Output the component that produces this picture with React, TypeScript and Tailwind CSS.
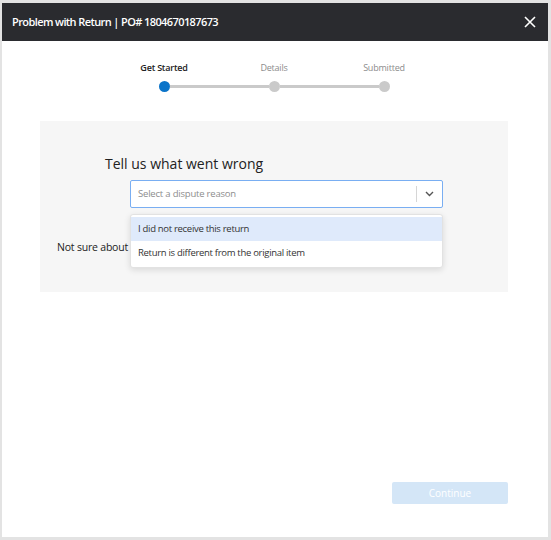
import React from 'react';

const steps = [
  { label: 'Get Started', active: true },
  { label: 'Details', active: false },
  { label: 'Submitted', active: false },
];

const reasons = ['I did not receive this return', 'Return is different from the original item'];

const App: React.FC = () => {
  return (
    <div
      className="h-[540px] w-[551px] bg-[#e3e3e3] pt-[3px] pl-[2px]"
      style={{ fontFamily: '"Open Sans", "Noto Sans", sans-serif' }}
    >
      <div className="flex h-[534px] w-[546px] flex-col bg-white">
        {/* header */}
        <div className="flex h-[38px] items-center justify-between bg-[#2a2b2f] pl-[10px] pr-[12px]">
          <span className="text-[11px] font-semibold tracking-[-0.6px] text-white">
            Problem with Return | PO# 1804670187673
          </span>
          <svg width="12" height="12" viewBox="0 0 12 12" className="text-white">
            <path d="M1 1 L11 11 M11 1 L1 11" stroke="currentColor" strokeWidth="1.6" />
          </svg>
        </div>

        {/* stepper */}
        <div className="ml-[107px] mt-[21px] w-[330px]">
          <div className="grid grid-cols-3">
            {steps.map((s) => (
              <div
                key={s.label}
                className={`text-center text-[9px] leading-[12px] tracking-[-0.2px] ${
                  s.active ? 'font-semibold text-[#222]' : 'text-[#8c8c8c]'
                }`}
              >
                {s.label}
              </div>
            ))}
          </div>
          <div className="mt-[7px] flex items-center px-[49.5px]">
            <div className="h-[11px] w-[11px] rounded-full bg-[#0b74c9]" />
            <div className="h-[3px] flex-1 bg-[#cacaca]" />
            <div className="h-[11px] w-[11px] rounded-full bg-[#cacaca]" />
            <div className="h-[3px] flex-1 bg-[#cacaca]" />
            <div className="h-[11px] w-[11px] rounded-full bg-[#cacaca]" />
          </div>
        </div>

        {/* gray panel */}
        <div className="ml-[38px] mr-[40px] mt-[29px] h-[171px] bg-[#f6f6f6] pt-[33px]">
          <div className="pl-[65px] text-[14px] leading-[20px] text-[#222]">Tell us what went wrong</div>
          <div className="relative ml-[90px] mt-[6px] w-[313px]">
            <div className="flex h-[28px] items-center rounded-[2px] border border-[#79aef2] bg-white">
              <span className="flex-1 pl-[7px] text-[9.5px] tracking-[-0.2px] text-[#8d8d8d]">
                Select a dispute reason
              </span>
              <div className="h-[16px] w-px bg-[#d6d6d6]" />
              <div className="flex w-[25px] items-center justify-center">
                <svg width="9" height="6" viewBox="0 0 9 6">
                  <path d="M1 1 L4.5 4.5 L8 1" fill="none" stroke="#555" strokeWidth="1.4" />
                </svg>
              </div>
            </div>
            <div className="absolute left-0 top-[34px] z-10 w-[313px] rounded-[3px] border border-[#e2e2e2] bg-white py-[2px] shadow-[0_2px_6px_rgba(0,0,0,0.12)]">
              {reasons.map((r, i) => (
                <div
                  key={r}
                  className={`flex h-[24px] items-center pl-[7px] text-[9.5px] tracking-[-0.3px] text-[#333] ${
                    i === 0 ? 'bg-[#dfeafb]' : ''
                  }`}
                >
                  {r}
                </div>
              ))}
            </div>
          </div>
          <div className="mt-[32px] pl-[17px] text-[10.5px] leading-[15px] tracking-[-0.2px] text-[#222]">
            Not sure about which reason to choose?
          </div>
        </div>

        {/* footer */}
        <div className="mt-auto mb-[33px] flex justify-end pr-[40px]">
          <button className="h-[22px] w-[116px] rounded-[2px] bg-[#d4e6f7] text-[10px] font-medium text-white">
            Continue
          </button>
        </div>
      </div>
    </div>
  );
};

export default App;
